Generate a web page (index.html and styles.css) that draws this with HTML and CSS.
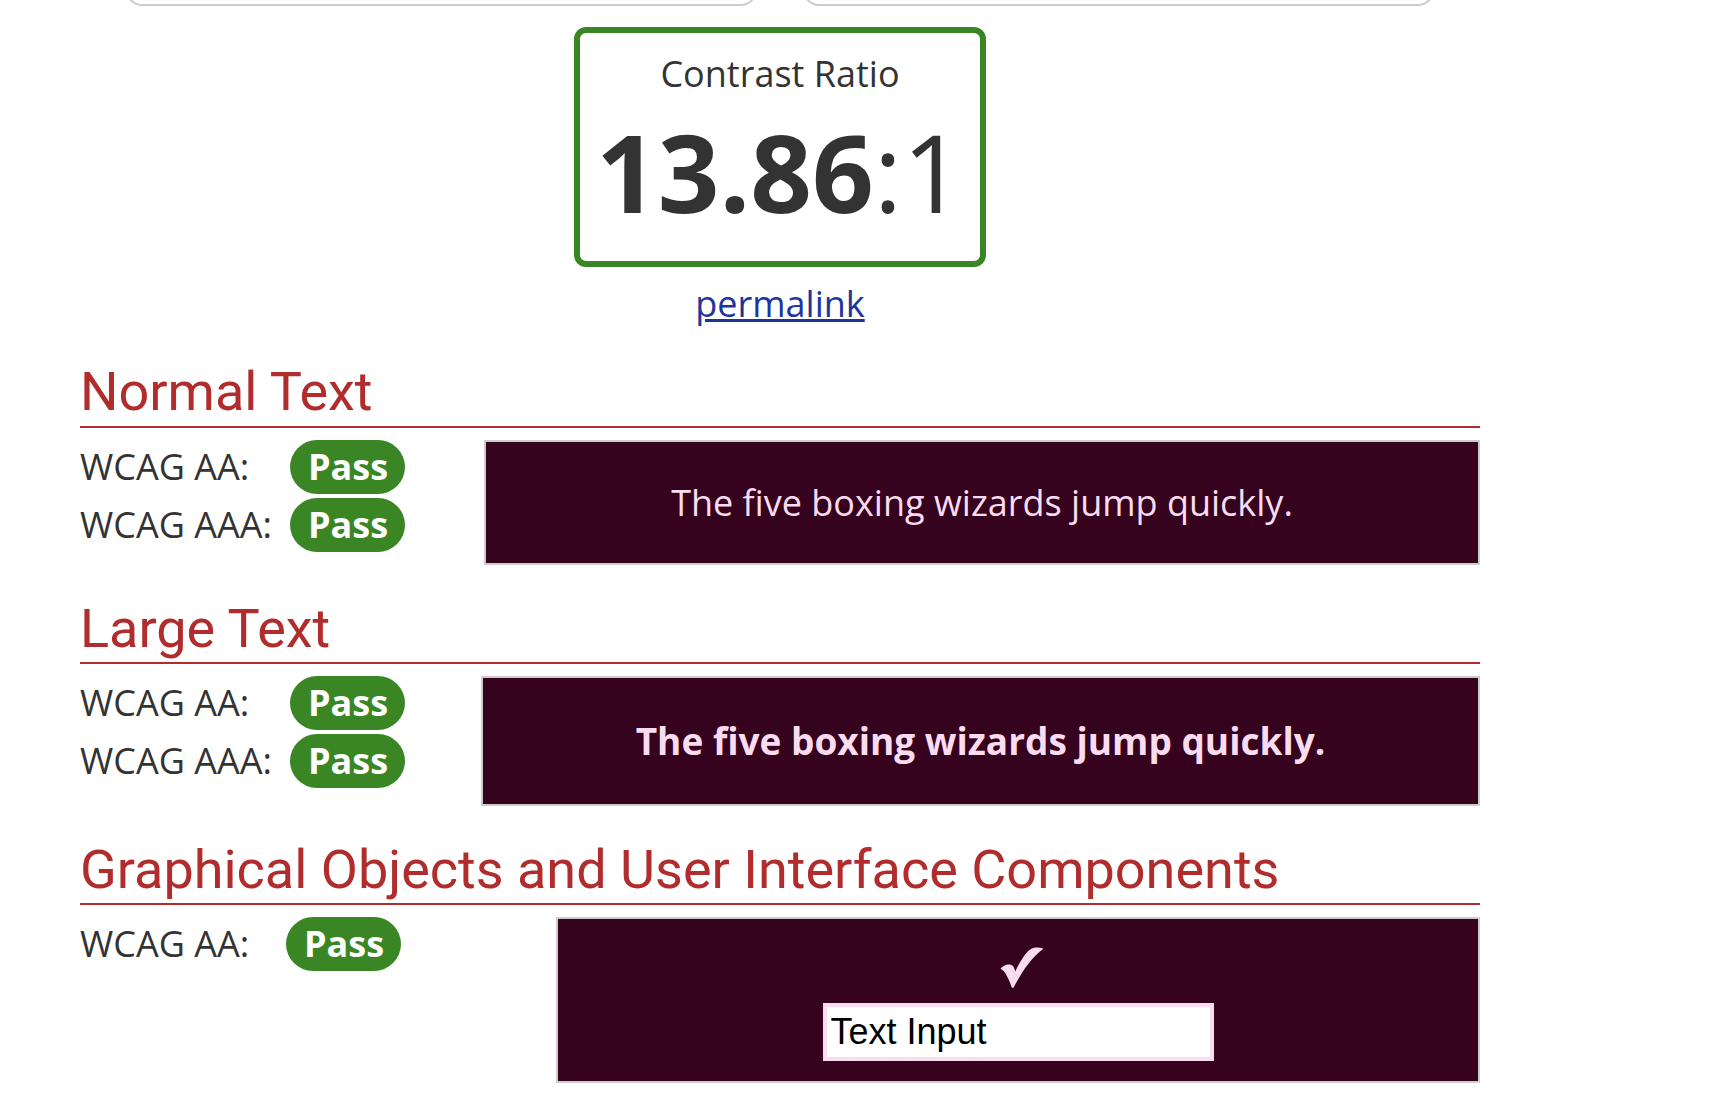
FILE: index.html
```html
<!DOCTYPE html>
<html lang="en">
<head>
<meta charset="utf-8">
<title>Contrast Checker</title>
<link rel="stylesheet" href="styles.css">
</head>
<body>
<main class="page">
  <div class="panels">
    <div class="panel"></div>
    <div class="panel"></div>
  </div>

  <div class="ratio">
    <div class="ratio-label">Contrast Ratio</div>
    <div class="ratio-value"><b>13.86</b>:1</div>
  </div>
  <div class="permalink"><a href="#permalink">permalink</a></div>

  <section>
    <h2>Normal Text</h2>
    <div class="result">
      <dl class="levels">
        <dt>WCAG AA:</dt><dd class="badge">Pass</dd>
        <dt>WCAG AAA:</dt><dd class="badge">Pass</dd>
      </dl>
      <div class="sample sample-normal">The five boxing wizards jump quickly.</div>
    </div>
  </section>

  <section>
    <h2>Large Text</h2>
    <div class="result">
      <dl class="levels">
        <dt>WCAG AA:</dt><dd class="badge">Pass</dd>
        <dt>WCAG AAA:</dt><dd class="badge">Pass</dd>
      </dl>
      <div class="sample sample-large">The five boxing wizards jump quickly.</div>
    </div>
  </section>

  <section>
    <h2>Graphical Objects and User Interface Components</h2>
    <div class="result">
      <dl class="levels levels-ui">
        <dt>WCAG AA:</dt><dd class="badge">Pass</dd>
      </dl>
      <div class="sample sample-ui">
        <svg class="check" viewBox="0 0 132 126" role="img" aria-label="Check mark"><path d="M0 67C6 59 15 54 24 54C38 54 42 62 45 75C59 47 75 19 92 7C102 0 118 0 132 5C96 31 68 71 40 125H35C28 105 19 85 9 73Z"/></svg>
        <input class="text-input" type="text" value="Text Input" aria-label="Text input sample">
      </div>
    </div>
  </section>
</main>
</body>
</html>
```

FILE: styles.css
```css
* {
  box-sizing: border-box;
}

body {
  margin: 0;
  background: #fff;
  color: #333;
  font-family: "Open Sans", sans-serif;
  font-size: 36px;
  line-height: 54px;
}

.page {
  padding: 0 248px 24px 80px;
  overflow: hidden;
}

.panels {
  display: flex;
  gap: 46px;
  margin: -34px 46px 21px;
}

.panel {
  flex: 1;
  height: 40px;
  border: 2px solid #ccc;
  border-radius: 16px;
}

.ratio {
  width: 412px;
  margin: 0 auto;
  padding: 14px 0 18px;
  border: 6px solid #3a8625;
  border-radius: 12px;
  text-align: center;
}

.ratio-value {
  font-size: 108px;
  line-height: 142px;
}

.permalink {
  margin-top: 10px;
  text-align: center;
}

.permalink a {
  color: #20359c;
}

h2 {
  margin: 32px 0 12px;
  padding-bottom: 1px;
  border-bottom: 2px solid #b12c2c;
  color: #b12c2c;
  font-family: Roboto, sans-serif;
  font-size: 54px;
  font-weight: 400;
  line-height: 64px;
}

.permalink + section h2 {
  margin-top: 29px;
  padding-bottom: 2px;
}

.result {
  display: flex;
  justify-content: space-between;
  align-items: flex-start;
}

.levels {
  display: grid;
  grid-template-columns: 210px auto;
  row-gap: 4px;
  margin: 0;
}

.levels-ui {
  grid-template-columns: 206px auto;
}

.badge {
  margin: 0;
  padding: 0 17px 0 18px;
  border-radius: 27px;
  background: #3a8625;
  color: #fff;
  font-weight: 700;
}

.sample {
  border: 2px solid #ccc;
  background: #35031d;
  color: #fadcf0;
  text-align: center;
}

.sample-normal {
  width: 996px;
  padding: 34px 0 33px;
}

.sample-large {
  width: 999px;
  padding: 36px 0;
  font-size: 37px;
  font-weight: 700;
}

.sample-ui {
  display: flex;
  flex-direction: column;
  align-items: center;
  gap: 15px;
  width: 924px;
  padding: 28px 0 20px;
}

.check {
  width: 44px;
  height: 41px;
  margin-left: 8px;
  fill: #fadcf0;
}

.text-input {
  width: 391px;
  height: 58px;
  padding: 2px 4px;
  border: 4px solid #fadcf0;
  border-radius: 0;
  background: #fff;
  color: #000;
  font-family: "Liberation Sans", Arial, sans-serif;
  font-size: 36px;
}
```
